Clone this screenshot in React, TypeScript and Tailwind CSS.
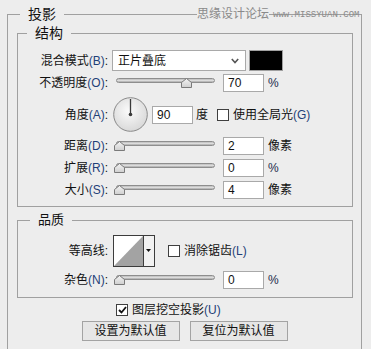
import React from 'react'

const font = "font-['Liberation_Sans','Noto_Sans_CJK_SC',sans-serif]"

function Label({ zh, k }: { zh: string; k?: string }) {
  return (
    <span className="w-[90px] shrink-0 text-right text-[12px] leading-[16px] text-[#111]">
      {zh}
      {k && <span className="text-[#1f3f78]">({k})</span>}:
    </span>
  )
}

function Field({ value }: { value: string }) {
  return (
    <div className="w-[41px] h-[18px] shrink-0 bg-white border border-[#a9a9a9] pl-[4px] text-[12px] leading-[16px] text-[#111]">
      {value}
    </div>
  )
}

function Slider({ pct }: { pct: number }) {
  return (
    <div className="relative w-[107px] h-[18px] shrink-0">
      <div className="absolute left-[4px] right-[4px] top-[4px] h-[5px] rounded-full border border-[#8e8e8e] bg-gradient-to-b from-[#bdbdbd] via-[#dcdcdc] to-[#a9a9a9]" />
      <svg className="absolute top-[4px]" style={{ left: 2 + pct * 0.95 }} width="11" height="10" viewBox="0 0 11 10">
        <defs>
          <linearGradient id="thumb" x1="0" y1="0" x2="0" y2="1">
            <stop offset="0" stopColor="#f4f4f4" />
            <stop offset="1" stopColor="#cfcfcf" />
          </linearGradient>
        </defs>
        <polygon points="5.5,0.5 10.5,4.5 10.5,9.5 0.5,9.5 0.5,4.5" fill="url(#thumb)" stroke="#7a7a7a" />
      </svg>
    </div>
  )
}

function Check({ checked }: { checked?: boolean }) {
  return (
    <div className="w-[12px] h-[12px] shrink-0 bg-white border border-[#3f3f3f] flex items-center justify-center">
      {checked && (
        <svg width="9" height="8" viewBox="0 0 9 8">
          <path d="M1 4 L3.5 6.5 L8 1" fill="none" stroke="#111" strokeWidth="1.8" />
        </svg>
      )}
    </div>
  )
}

function Dial() {
  return (
    <svg width="35" height="35" viewBox="0 0 35 35" className="shrink-0">
      <defs>
        <radialGradient id="dial" cx="0.45" cy="0.4" r="0.65">
          <stop offset="0" stopColor="#fbfbfb" />
          <stop offset="1" stopColor="#d6d6d6" />
        </radialGradient>
      </defs>
      <circle cx="17.5" cy="17.5" r="16.8" fill="url(#dial)" stroke="#8a8a8a" />
      <line x1="17.5" y1="17.5" x2="17.5" y2="2" stroke="#3a3a3a" strokeWidth="1.3" />
      <circle cx="17.5" cy="17.5" r="1.8" fill="#3a3a3a" />
    </svg>
  )
}

function Contour() {
  return (
    <svg width="42" height="32" viewBox="0 0 42 32" className="shrink-0">
      <rect x="0.5" y="0.5" width="41" height="31" fill="#fff" />
      <polygon points="1,31 30,1 30,31" fill="#a3a3a3" />
      <rect x="31" y="1" width="10" height="30" fill="#f2f2f2" />
      <line x1="30.5" y1="1" x2="30.5" y2="31" stroke="#3c3c3c" />
      <polygon points="33,14 38,14 35.5,17" fill="#111" />
      <rect x="0.5" y="0.5" width="41" height="31" fill="none" stroke="#3c3c3c" />
    </svg>
  )
}

export default function App() {
  return (
    <div className={`relative w-[371px] h-[349px] overflow-hidden bg-[#ededed] pt-[5px] pl-[7px] ${font}`}>
      <fieldset className="w-[355px] h-[380px] border border-[#a0a0a0]">
        <legend className="ml-[12px] px-[8px] text-[14px] leading-[18px] text-[#111]">投影</legend>

        {/* 结构 */}
        <fieldset className="ml-[9px] mt-[1px] w-[336px] border border-[#a0a0a0] pb-[7px]">
          <legend className="ml-[9px] px-[8px] text-[14px] leading-[18px] text-[#111]">结构</legend>

          <div className="flex items-center h-[21px] mt-[8px]">
            <Label zh="混合模式" k="B" />
            <div className="ml-[4px] w-[134px] h-[21px] bg-white border border-[#a9a9a9] flex items-center justify-between pl-[5px] pr-[6px] text-[12px] text-[#111]">
              <span>正片叠底</span>
              <svg width="8" height="6" viewBox="0 0 8 6">
                <path d="M0.8 1 L4 4.5 L7.2 1" fill="none" stroke="#555" strokeWidth="1.6" />
              </svg>
            </div>
            <div className="ml-[3px] w-[34px] h-[21px] bg-black border border-[#a0a0a0]" />
          </div>

          <div className="flex items-center h-[18px] mt-[3px]">
            <Label zh="不透明度" k="O" />
            <div className="ml-[4px] flex items-center">
              <Slider pct={70} />
              <div className="ml-[4px]"><Field value="70" /></div>
              <span className="ml-[4px] text-[12px] text-[#1c2c4c]">%</span>
            </div>
          </div>

          <div className="flex items-center h-[35px] mt-[5px]">
            <Label zh="角度" k="A" />
            <div className="ml-[5px] flex items-center">
              <Dial />
              <div className="ml-[4px]"><Field value="90" /></div>
              <span className="ml-[3px] text-[12px] text-[#111]">度</span>
              <div className="ml-[9px]"><Check /></div>
              <span className="ml-[4px] text-[12px] text-[#111]">
                使用全局光<span className="text-[#1f3f78]">(G)</span>
              </span>
            </div>
          </div>

          {[
            { zh: '距离', k: 'D', v: '2', u: '像素', p: 0 },
            { zh: '扩展', k: 'R', v: '0', u: '%', p: 0 },
            { zh: '大小', k: 'S', v: '4', u: '像素', p: 0 },
          ].map((r, i) => (
            <div key={r.k} className={`flex items-center h-[18px] ${i === 0 ? 'mt-[5px]' : 'mt-[4px]'}`}>
              <Label zh={r.zh} k={r.k} />
              <div className="ml-[4px] flex items-center">
                <Slider pct={r.p} />
                <div className="ml-[4px]"><Field value={r.v} /></div>
                <span className={`ml-[4px] text-[12px] ${r.u === '%' ? 'text-[#1c2c4c]' : 'text-[#111]'}`}>{r.u}</span>
              </div>
            </div>
          ))}
        </fieldset>

        {/* 品质 */}
        <fieldset className="ml-[9px] mt-[4px] w-[336px] border border-[#a0a0a0] pb-[8px]">
          <legend className="ml-[12px] px-[8px] text-[13px] leading-[18px] text-[#111]">品质</legend>

          <div className="flex items-center h-[32px] mt-[6px]">
            <span className="w-[90px] shrink-0 text-right text-[12px] leading-[16px] text-[#111]">等高线:</span>
            <div className="ml-[5px] flex items-center">
              <Contour />
              <div className="ml-[13px]"><Check /></div>
              <span className="ml-[4px] text-[12px] text-[#111]">
                消除锯齿<span className="text-[#1f3f78]">(L)</span>
              </span>
            </div>
          </div>

          <div className="flex items-center h-[18px] mt-[4px]">
            <Label zh="杂色" k="N" />
            <div className="ml-[4px] flex items-center">
              <Slider pct={0} />
              <div className="ml-[4px]"><Field value="0" /></div>
              <span className="ml-[4px] text-[12px] text-[#1c2c4c]">%</span>
            </div>
          </div>
        </fieldset>

        <div className="flex items-center h-[16px] mt-[4px] pl-[108px]">
          <Check checked />
          <span className="ml-[4px] text-[12px] text-[#111]">
            图层挖空投影<span className="text-[#1f3f78]">(U)</span>
          </span>
        </div>

        <div className="flex justify-center gap-[10px] mt-[3px]">
          <div className="w-[98px] h-[20px] border border-[#a3a3a3] bg-[#e6e6e6] flex items-center justify-center text-[12px] text-[#111]">设置为默认值</div>
          <div className="w-[98px] h-[20px] border border-[#a3a3a3] bg-[#e6e6e6] flex items-center justify-center text-[12px] text-[#111]">复位为默认值</div>
        </div>
      </fieldset>

      <div className="absolute left-[197px] top-[6px] flex items-end">
        <span className="bg-[#ededed] text-[12px] leading-[16px] text-[#8a8a8a]">思缘设计论坛</span>
        <span className="ml-[4px] mb-[2px] font-['Liberation_Mono',monospace] text-[9px] leading-[10px] text-[#8a8a8a]">www.MISSYUAN.COM</span>
      </div>
    </div>
  )
}
